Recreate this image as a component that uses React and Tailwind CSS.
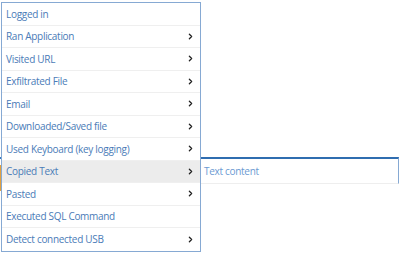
import { ChevronRight } from "lucide-react";

const items = [
  { label: "Logged in", sub: false },
  { label: "Ran Application", sub: true },
  { label: "Visited URL", sub: true },
  { label: "Exfiltrated File", sub: true },
  { label: "Email", sub: true },
  { label: "Downloaded/Saved file", sub: true },
  { label: "Used Keyboard (key logging)", sub: true },
  { label: "Copied Text", sub: true, active: true },
  { label: "Pasted", sub: true },
  { label: "Executed SQL Command", sub: false },
  { label: "Detect connected USB", sub: true },
];

export default function App() {
  return (
    <div
      className="w-[400px] h-[255px] bg-white overflow-hidden flex items-start"
      style={{ fontFamily: "'Open Sans', 'Noto Sans', sans-serif" }}
    >
      {/* peek of the page behind the menu */}
      <div className="w-px flex flex-col shrink-0">
        <div className="h-[157px]" />
        <div className="h-[2px] bg-[#3b7bc0]" />
        <div className="h-[6px]" />
        <div className="h-[26px] bg-[#e0a040]" />
      </div>

      <div className="mt-[2px] w-[200px] shrink-0 border border-[#86a9d3] bg-white flex flex-col">
        {items.map((item, i) => (
          <div
            key={item.label}
            className={`h-[22.5px] flex items-center justify-between pl-[4px] pr-[5px] text-[10px] tracking-[-0.3px] text-[#4a7bb7] ${
              i < items.length - 1 ? "border-b border-[#efefef]" : ""
            } ${item.active ? "bg-[#ececec]" : ""}`}
          >
            <span className="leading-none">{item.label}</span>
            {item.sub && (
              <ChevronRight size={9} strokeWidth={3.5} className="text-[#222]" />
            )}
          </div>
        ))}
      </div>

      <div className="mt-[157px] w-[198px] shrink-0 bg-white border-t-2 border-t-[#2f6db0] border-r border-r-[#86a9d3] border-b border-b-[#eeeeee]">
        <div className="h-[24px] flex items-center pl-[3px] text-[10px] tracking-[-0.3px] text-[#6b9ad2]">
          <span className="leading-none">Text content</span>
        </div>
      </div>
    </div>
  );
}
